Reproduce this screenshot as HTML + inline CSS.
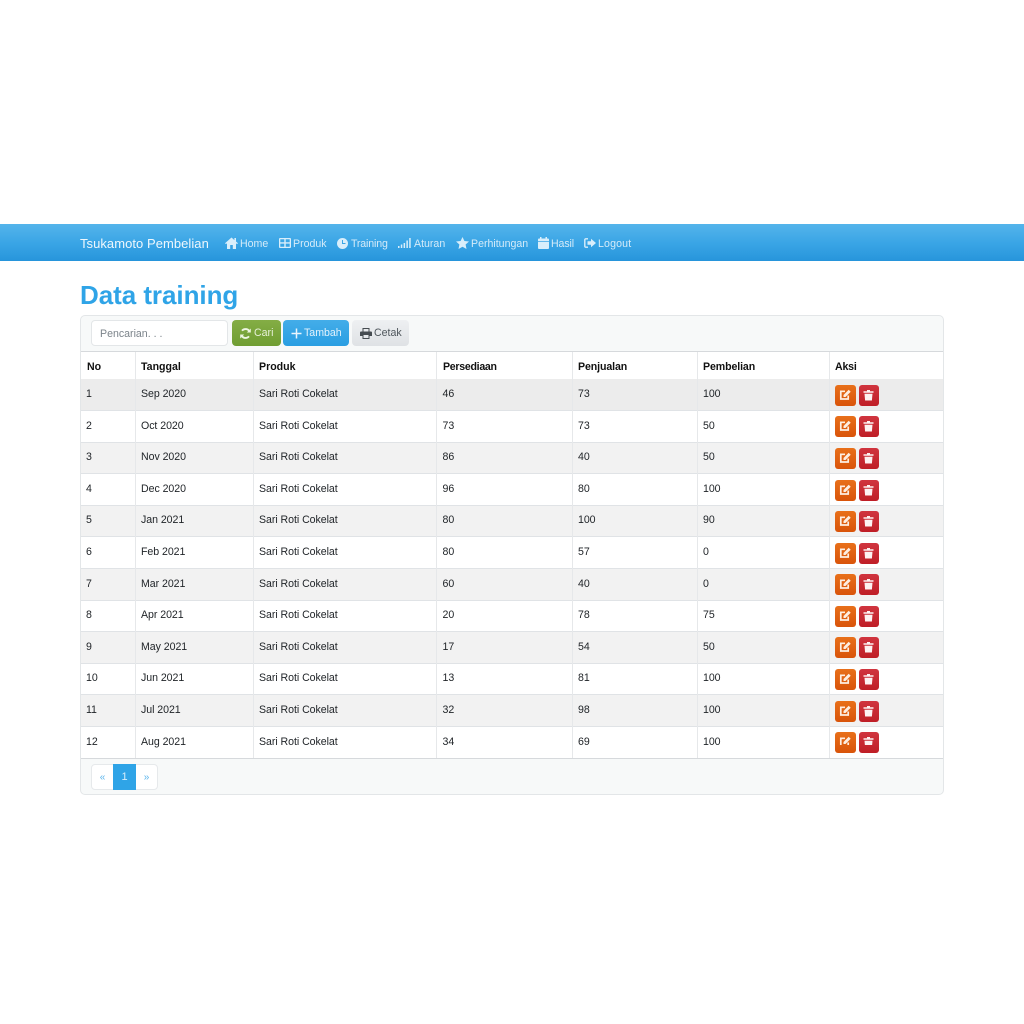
<!DOCTYPE html>
<html><head><meta charset="utf-8"><style>
html,body{margin:0;padding:0;background:#fff}
body{width:1024px;height:1024px;position:relative;overflow:hidden;font-family:"Liberation Sans",sans-serif;font-size:10.6px;color:#212529}
.a{position:absolute;white-space:nowrap}
.nav{position:absolute;left:0;top:224px;width:1024px;height:37px;background:linear-gradient(#54b4eb,#38a4e5 55%,#2795db)}
.n{position:absolute;top:237px;font-size:10.6px;line-height:14px;color:#d5ebf9;white-space:nowrap}
svg{position:absolute}
.btn{position:absolute;top:320px;height:26px;border-radius:4px;line-height:27px;font-size:10.6px;box-sizing:border-box;white-space:nowrap}
.row{position:absolute;left:81px;width:862px;height:31px;border-bottom:1px solid #e0e3e6;box-sizing:content-box}
.c{position:absolute;top:8px;white-space:nowrap;line-height:14px;color:#212529;letter-spacing:-.05px}
.s .c{top:7px}
.v{position:absolute;width:1px;background:#e6e8ea;top:352px;height:406px}
.e,.d{position:absolute;width:21px;height:21px;border-radius:3px;top:var(--t,5px)}
.e{left:754px;background:linear-gradient(#e8701a,#d9540a)}
.d{left:778px;width:20px;background:linear-gradient(#d0353f,#bf1e26)}
.th{position:absolute;top:360px;font-weight:bold;color:#111;line-height:14px;white-space:nowrap}
</style></head><body>
<div class="nav"></div>
<div class="a" style="left:80px;top:235px;font-size:13px;line-height:17px;color:#eef7fd;letter-spacing:.05px">Tsukamoto Pembelian</div>

<svg style="left:225px;top:237px" width="13" height="12" viewBox="0 0 13 12"><path d="M6.500 .5 0 6.300l1 .8 1-.8V12h3.200V8h2.600v4H11V6.300l1 .8 1-.8-2-1.800V1H9.400v2.100z" fill="#d9eefb"/></svg>
<div class="n" style="left:240px">Home</div>
<svg style="left:279px;top:238px" width="12" height="10" viewBox="0 0 12 10"><path fill-rule="evenodd" d="M1 0h10a1 1 0 0 1 1 1v8a1 1 0 0 1-1 1H1a1 1 0 0 1-1-1V1a1 1 0 0 1 1-1zm.3 1.300v3h4v-3zm5.400 0v3h4v-3zM1.300 5.600v3.100h4V5.600zm5.400 0v3.100h4V5.600z" fill="#d9eefb"/></svg>
<div class="n" style="left:293px">Produk</div>
<svg style="left:337px;top:238px" width="11" height="11" viewBox="0 0 11 11"><path fill-rule="evenodd" d="M5.500 0a5.500 5.500 0 1 1 0 11a5.500 5.500 0 0 1 0-11zM5 2v4h3.500V5H6V2z" fill="#d9eefb"/></svg>
<div class="n" style="left:351px;letter-spacing:-.15px">Training</div>
<svg style="left:398px;top:238px" width="13" height="10" viewBox="0 0 13 10"><path d="M0 8h1.500v2H0zM2.800 6.500h1.500V10H2.800zM5.600 5h1.500v5H5.600zM8.400 2.500h1.500V10H8.400zM11.200 0h1.500v10h-1.500z" fill="#d9eefb"/></svg>
<div class="n" style="left:414px">Aturan</div>
<svg style="left:456px;top:237px" width="13" height="12" viewBox="0 0 13 12"><path d="M6.500 0l1.900 4 4.600.5-3.400 3 .9 4.500-4-2.300-4 2.300.9-4.500L0 4.500 4.600 4z" fill="#d9eefb"/></svg>
<div class="n" style="left:471px">Perhitungan</div>
<svg style="left:538px;top:237px" width="11" height="12" viewBox="0 0 11 12"><path d="M2 0h1.500v1.500h4V0H9v1.500h1a1 1 0 0 1 1 1V4H0V2.500a1 1 0 0 1 1-1h1zM0 4.800h11V11a1 1 0 0 1-1 1H1a1 1 0 0 1-1-1z" fill="#d9eefb"/></svg>
<div class="n" style="left:551px;letter-spacing:-.1px">Hasil</div>
<svg style="left:584px;top:238px" width="12" height="10" viewBox="0 0 12 10"><path d="M4 .8H1.800A1 1 0 0 0 .8 1.800v6.400a1 1 0 0 0 1 1H4" fill="none" stroke="#d9eefb" stroke-width="1.400"/><path d="M7 .8 12 5 7 9.200V6.800H3.500V3.200H7z" fill="#d9eefb"/></svg>
<div class="n" style="left:598px;letter-spacing:.15px">Logout</div>

<div class="a" style="left:80px;top:278px;font-size:26px;line-height:34px;font-weight:bold;color:#2fa4e7;letter-spacing:-.05px">Data training</div>

<div class="a" style="left:80px;top:315px;width:862px;height:478px;border:1px solid #e3e6e8;border-radius:5px;background:#f7f9f9"></div>
<div class="a" style="left:91px;top:320px;width:135px;height:24px;border:1px solid #e3e6e8;border-radius:4px;background:#fff;line-height:26px;text-indent:8px;color:#7b838a">Pencarian. . .</div>

<div class="btn" style="left:232px;width:49px;background:linear-gradient(#84ad45,#6f9d32);color:#e6f0d8;padding-left:22px">Cari</div>
<svg style="left:240px;top:328px" width="11" height="11" viewBox="0 0 11 11"><path d="M9.700 4A4.500 4.500 0 0 0 2 2.700M1.300 7A4.500 4.500 0 0 0 9 8.300" fill="none" stroke="#eef6e2" stroke-width="1.900"/><path d="M10.800 .5V4.500H6.800zM.2 10.500V6.500H4.200z" fill="#eef6e2"/></svg>
<div class="btn" style="left:283px;width:66px;background:linear-gradient(#44ade9,#2a9ee2);color:#e3f2fc;padding-left:21px">Tambah</div>
<svg style="left:291px;top:328px" width="11" height="11" viewBox="0 0 11 11"><path d="M5.500 .5v10M.5 5.500h10" stroke="#eaf5fd" stroke-width="1.500"/></svg>
<div class="btn" style="left:352px;width:57px;background:linear-gradient(#eef0f2,#dfe2e5);color:#4f565c;padding-left:22px">Cetak</div>
<svg style="left:360px;top:328px" width="12" height="11" viewBox="0 0 12 11"><path fill-rule="evenodd" d="M2.500 0h7v3.500h1.500a1 1 0 0 1 1 1V8H9.500v3h-7V8H0V4.500a1 1 0 0 1 1-1h1.500zM3.500 1v2.500h5V1zM3.500 7v3h5V7z" fill="#454b50"/></svg>

<div class="a" style="left:81px;top:351px;width:862px;height:406px;background:#fff;border-top:1px solid #d6d9dc"></div>

<div class="row" style="top:379px;height:31px;background:#ececec;--t:6px"><span class="c" style="left:5px">1</span><span class="c" style="left:60px">Sep 2020</span><span class="c" style="left:178px">Sari Roti Cokelat</span><span class="c" style="left:361.500px">46</span><span class="c" style="left:497px">73</span><span class="c" style="left:622px">100</span><i class="e"></i><i class="d"></i></div>
<div class="row" style="top:411px;height:31px;background:#fff"><span class="c" style="left:5px">2</span><span class="c" style="left:60px">Oct 2020</span><span class="c" style="left:178px">Sari Roti Cokelat</span><span class="c" style="left:361.500px">73</span><span class="c" style="left:497px">73</span><span class="c" style="left:622px">50</span><i class="e"></i><i class="d"></i></div>
<div class="row s" style="top:443px;height:30px;background:#f2f2f2"><span class="c" style="left:5px">3</span><span class="c" style="left:60px">Nov 2020</span><span class="c" style="left:178px">Sari Roti Cokelat</span><span class="c" style="left:361.500px">86</span><span class="c" style="left:497px">40</span><span class="c" style="left:622px">50</span><i class="e"></i><i class="d"></i></div>
<div class="row" style="top:474px;height:31px;background:#fff;--t:6px"><span class="c" style="left:5px">4</span><span class="c" style="left:60px">Dec 2020</span><span class="c" style="left:178px">Sari Roti Cokelat</span><span class="c" style="left:361.500px">96</span><span class="c" style="left:497px">80</span><span class="c" style="left:622px">100</span><i class="e"></i><i class="d"></i></div>
<div class="row s" style="top:506px;height:30px;background:#f2f2f2"><span class="c" style="left:5px">5</span><span class="c" style="left:60px">Jan 2021</span><span class="c" style="left:178px">Sari Roti Cokelat</span><span class="c" style="left:361.500px">80</span><span class="c" style="left:497px">100</span><span class="c" style="left:622px">90</span><i class="e"></i><i class="d"></i></div>
<div class="row" style="top:537px;height:31px;background:#fff;--t:6px"><span class="c" style="left:5px">6</span><span class="c" style="left:60px">Feb 2021</span><span class="c" style="left:178px">Sari Roti Cokelat</span><span class="c" style="left:361.500px">80</span><span class="c" style="left:497px">57</span><span class="c" style="left:622px">0</span><i class="e"></i><i class="d"></i></div>
<div class="row" style="top:569px;height:31px;background:#f2f2f2"><span class="c" style="left:5px">7</span><span class="c" style="left:60px">Mar 2021</span><span class="c" style="left:178px">Sari Roti Cokelat</span><span class="c" style="left:361.500px">60</span><span class="c" style="left:497px">40</span><span class="c" style="left:622px">0</span><i class="e"></i><i class="d"></i></div>
<div class="row s" style="top:601px;height:30px;background:#fff"><span class="c" style="left:5px">8</span><span class="c" style="left:60px">Apr 2021</span><span class="c" style="left:178px">Sari Roti Cokelat</span><span class="c" style="left:361.500px">20</span><span class="c" style="left:497px">78</span><span class="c" style="left:622px">75</span><i class="e"></i><i class="d"></i></div>
<div class="row" style="top:632px;height:31px;background:#f2f2f2"><span class="c" style="left:5px">9</span><span class="c" style="left:60px">May 2021</span><span class="c" style="left:178px">Sari Roti Cokelat</span><span class="c" style="left:361.500px">17</span><span class="c" style="left:497px">54</span><span class="c" style="left:622px">50</span><i class="e"></i><i class="d"></i></div>
<div class="row s" style="top:664px;height:30px;background:#fff"><span class="c" style="left:5px">10</span><span class="c" style="left:60px">Jun 2021</span><span class="c" style="left:178px">Sari Roti Cokelat</span><span class="c" style="left:361.500px">13</span><span class="c" style="left:497px">81</span><span class="c" style="left:622px">100</span><i class="e"></i><i class="d"></i></div>
<div class="row" style="top:695px;height:31px;background:#f2f2f2;--t:6px"><span class="c" style="left:5px">11</span><span class="c" style="left:60px">Jul 2021</span><span class="c" style="left:178px">Sari Roti Cokelat</span><span class="c" style="left:361.500px">32</span><span class="c" style="left:497px">98</span><span class="c" style="left:622px">100</span><i class="e"></i><i class="d"></i></div>
<div class="row" style="top:727px;height:31px;background:#fff;border-bottom:1px solid #d6d9dc"><span class="c" style="left:5px">12</span><span class="c" style="left:60px">Aug 2021</span><span class="c" style="left:178px">Sari Roti Cokelat</span><span class="c" style="left:361.500px">34</span><span class="c" style="left:497px">69</span><span class="c" style="left:622px">100</span><i class="e"></i><i class="d"></i></div>

<div class="v" style="left:135px"></div><div class="v" style="left:253px"></div><div class="v" style="left:436px"></div><div class="v" style="left:572px"></div><div class="v" style="left:697px"></div><div class="v" style="left:829px"></div>

<div class="th" style="left:87px">No</div><div class="th" style="left:141px">Tanggal</div><div class="th" style="left:259px">Produk</div><div class="th" style="left:443px;letter-spacing:-.28px">Persediaan</div><div class="th" style="left:578px;letter-spacing:-.1px">Penjualan</div><div class="th" style="left:703px;letter-spacing:-.1px">Pembelian</div><div class="th" style="left:835px;letter-spacing:-.2px">Aksi</div>

<svg style="left:835px;top:385px" width="44" height="360" viewBox="0 0 44 360">
<defs>
<g id="ic"><path d="M10 6.300H5.800V14h7.400v-3.500" fill="none" stroke="#fdeee2" stroke-width="1.700"/><path d="M8.500 10l5.200-5.200 2 2L10.500 12H8.500z" fill="#fdeee2"/><path d="M28.500 6.300h10v1.500h-10zM32 5h3v1.300h-3zM29.500 8.800h8l-.6 6.700h-6.800z" fill="#fdf2f2"/></g>
</defs>
<use href="#ic" y="0"/><use href="#ic" y="31"/><use href="#ic" y="63"/><use href="#ic" y="95"/><use href="#ic" y="126"/><use href="#ic" y="158"/><use href="#ic" y="189"/><use href="#ic" y="221"/><use href="#ic" y="252"/><use href="#ic" y="284"/><use href="#ic" y="316"/><use href="#ic" y="347"/>
</svg>

<div class="a" style="left:91px;top:764px;width:65px;height:24px;border:1px solid #e6e9eb;border-radius:4px;background:#fff"></div>
<div class="a" style="left:113px;top:764px;width:23px;height:26px;background:#2fa4e7;color:#d8eefb;text-align:center;line-height:27px;font-size:11px">1</div>
<div class="a" style="left:92px;top:764px;width:21px;height:26px;color:#5ab5ec;text-align:center;line-height:27px;font-size:10px">«</div>
<div class="a" style="left:136px;top:764px;width:21px;height:26px;color:#5ab5ec;text-align:center;line-height:27px;font-size:10px">»</div>
</body></html>
